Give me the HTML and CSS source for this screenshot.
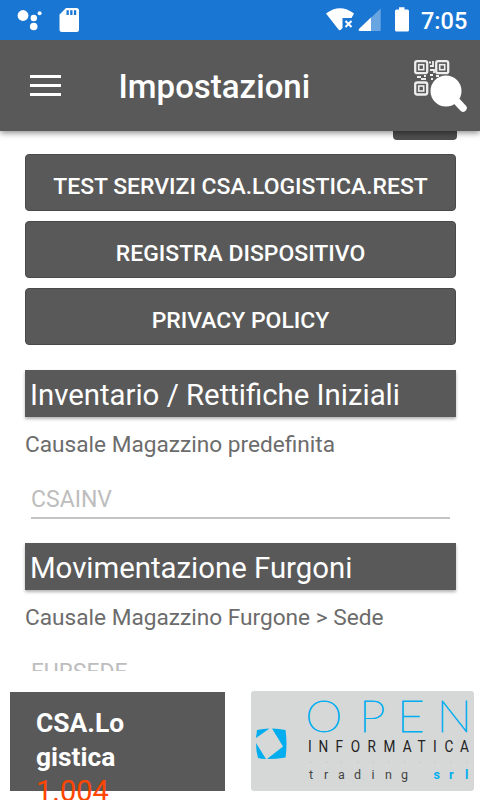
FILE: index.html
```
<!DOCTYPE html>
<html lang="it">

<head>
    <meta charset="UTF-8">
    <meta name="viewport" content="width=device-width, initial-scale=1.0">
    <title>Impostazioni</title>
    <link rel="stylesheet" href="styles.css">
</head>

<body>
    <div class="status">
        <svg class="status-left" width="90" height="40" viewBox="0 0 90 40" fill="#fff">
            <circle cx="23" cy="15.5" r="5.4" />
            <circle cx="33.8" cy="18" r="3.2" />
            <circle cx="39.6" cy="13.2" r="2" />
            <circle cx="33.7" cy="26.5" r="3.8" />
            <path fill-rule="evenodd" d="M66 8h10.500q2.500 0 2.500 2.500v19q0 2.500-2.500 2.500h-14.500q-2.500 0-2.500-2.500v-15zM66.500 10.200v4.800h2.300v-4.800zM70.200 10.200v4.800h2.300v-4.800zM73.900 10.200v4.800h2.300v-4.800z" />
        </svg>
        <svg class="status-right" width="90" height="40" viewBox="320 0 90 40" fill="#fff">
            <path d="M326 13.500Q340 3 354 13.500L351.500 18H342.500V28L340.500 30Q339.500 30.500 338.500 29.500Z" />
            <path d="M345.500 21l6 6M351.500 21l-6 6" stroke="#fff" stroke-width="2" />
            <path d="M380.700 8.500V31H360Q357.500 30.500 359.500 28.500Z" opacity=".35" />
            <path d="M371 17.500V31H360Q357.500 30.500 359.500 28.500Z" />
            <path d="M399 7.200h5.500v2.300h3q1.500 0 1.500 1.500v19q0 1.500-1.500 1.500h-11q-1.500 0-1.500-1.500v-19q0-1.500 1.500-1.500h2.500z" />
        </svg>
        <span class="clock">7:05</span>
    </div>

    <header class="toolbar">
        <svg class="menu" width="31" height="22" viewBox="0 0 31 22">
            <path d="M0 1.500h31M0 10.500h31M0 19.500h31" stroke="#fff" stroke-width="3" />
        </svg>
        <h1>Impostazioni</h1>
        <svg class="scan" width="54" height="54" viewBox="413 58 54 54" fill="none" stroke="#eee">
            <g stroke-width="2.300">
                <rect x="415.200" y="60.200" width="12" height="12" rx="2" />
                <rect x="436.200" y="60.200" width="12" height="12" rx="2" />
                <rect x="415.200" y="81.500" width="12" height="12" rx="2" />
            </g>
            <g stroke-width="1.600">
                <rect x="418.700" y="63.700" width="5" height="5" />
                <rect x="439.700" y="63.700" width="5" height="5" />
                <rect x="418.700" y="85" width="5" height="5" />
            </g>
            <path stroke-width="1.800" d="M429 61.500h2M433 60v5h-3M430 69h4v3M417 76h4M421 78h5M424 75h2M430 74h3M431 78h2M436 75h3" />
            <circle cx="446" cy="90" r="15.500" fill="#fff" stroke="none" />
            <path d="M456 99.500l7 7.500" stroke="#fff" stroke-width="7.500" stroke-linecap="round" />
        </svg>
    </header>

    <main class="content">
        <div class="btn-small"></div>
        <button type="button" class="btn">TEST SERVIZI CSA.LOGISTICA.REST</button>
        <button type="button" class="btn">REGISTRA DISPOSITIVO</button>
        <button type="button" class="btn">PRIVACY POLICY</button>

        <h2>Inventario / Rettifiche Iniziali</h2>
        <p class="label">Causale Magazzino predefinita</p>
        <div class="field">CSAINV</div>

        <h2>Movimentazione Furgoni</h2>
        <p class="label">Causale Magazzino Furgone &gt; Sede</p>
        <div class="field">FURSEDE</div>
    </main>

    <footer class="footer">
        <div class="version">
            <b>CSA.Lo<br>gistica</b>
            <span>1.004</span>
        </div>
        <div class="logo">
            <svg width="223" height="100" viewBox="251 691 223 100">
                <path fill="#00adef" d="M257 730Q263 728.500 269.500 728.500L256 738ZM272 728.500Q279 728.500 285.500 730Q287.500 744 285.500 757.500Q277 759 267 759L283 746.500ZM256 743L266 759Q261 759 258 758Q256 751 256 743Z" />
                <!-- wide and condensed lines, x values are in the scaled space -->
                <text class="logo-open" transform="scale(1.1 1)" y="732" x="277.500 326.400 361 396.800">OPEN</text>
                <text class="logo-info" transform="scale(.8 1)" y="752" x="385 398 419.400 438.300 459.400 479.400 503.300 522 541.300 555.600 575">INFORMATICA</text>
                <text class="logo-dots" y="762.500" x="309 325 339.500 356 371.500 387 403 418 433 449 465">...........</text>
                <text class="logo-trading" y="779" x="309 324 338 354 371.500 385 401">trading</text>
                <text class="logo-srl" y="779" x="433.500 449 465">srl</text>
            </svg>
        </div>
    </footer>
</body>

</html>
```
FILE: styles.css
```
* {
    box-sizing: border-box;
}

body {
    margin: 0;
    height: 800px;
    display: flex;
    flex-direction: column;
    overflow: hidden;
    background-color: #fff;
    font-family: Roboto, "Liberation Sans", sans-serif;
}

h1,
h2,
p {
    margin: 0;
}

svg {
    display: block;
}

.status {
    display: flex;
    flex: none;
    height: 40px;
    background-color: #1976d2;
    color: #fff;
}

.status-right {
    margin-left: auto;
}

.clock {
    width: 70px;
    padding-left: 11px;
    font-size: 23.500px;
    font-weight: 500;
    line-height: 42px;
}

.toolbar {
    display: flex;
    flex: none;
    align-items: center;
    height: 91px;
    padding: 0 13px 0 30px;
    background-color: #595959;
    color: #fff;
    box-shadow: 0 2px 6px rgba(0, 0, 0, 0.45);
    clip-path: inset(0 0 -12px 0);
    z-index: 1;
}

.toolbar h1 {
    margin-left: 57.500px;
    padding-top: 1px;
    font-size: 33px;
    font-weight: 500;
}

.scan {
    margin-left: auto;
}

.content {
    flex: none;
    height: 540px;
    padding: 0 24px 0 25px;
    overflow: hidden;
}

.btn-small {
    width: 64px;
    height: 9px;
    margin: 0 -1px 14px auto;
    border-radius: 0 0 4px 4px;
    background-color: #4e4e4e;
}

.btn {
    display: block;
    width: 100%;
    height: 57px;
    margin-bottom: 10.200px;
    padding: 8px 0 0;
    border: 1px solid #494949;
    border-radius: 4px;
    background-color: #595959;
    color: #fff;
    font: 500 22.950px Roboto, sans-serif;
}

h2 {
    height: 47px;
    margin-top: 24.300px;
    padding-left: 5px;
    background-color: #595959;
    box-shadow: 0 2px 3px rgba(0, 0, 0, 0.3);
    color: #fff;
    font-size: 29.350px;
    font-weight: 400;
    line-height: 50px;
}

.label {
    margin-top: 13px;
    color: #6c6c6c;
    font-size: 22.650px;
    line-height: 30px;
}

.field {
    height: 44px;
    margin: 15px 6px 0;
    padding-top: 10px;
    border-bottom: 2px solid #c4c4c4;
    color: #bdbdbd;
    font-size: 23px;
    line-height: 30px;
}

.footer {
    display: flex;
    flex: none;
    height: 129px;
    padding: 21px 6px 0 10px;
    overflow: hidden;
}

.version {
    width: 215px;
    height: 99px;
    padding: 14px 0 0 26px;
    background-color: #595959;
    color: #fff;
    font-size: 26.400px;
    line-height: 34px;
}

.version span {
    display: block;
    color: #ff4500;
    font-size: 29px;
}

.logo {
    width: 223px;
    height: 100px;
    margin: -1px 0 0 26px;
    border-radius: 3px;
    background-color: #d6d8d8;
}

.logo-open {
    fill: #00adef;
    stroke: #00adef;
    stroke-width: 0.800px;
    font-family: Lato, sans-serif;
    font-size: 43px;
    font-weight: 100;
}

.logo-info {
    fill: #222;
    font-size: 17px;
}

.logo-dots {
    fill: #c9cbcb;
    font-size: 14px;
}

.logo-trading {
    fill: #444;
    font-size: 12.500px;
}

.logo-srl {
    fill: #00adef;
    font-size: 12.500px;
    font-weight: 700;
}
```
